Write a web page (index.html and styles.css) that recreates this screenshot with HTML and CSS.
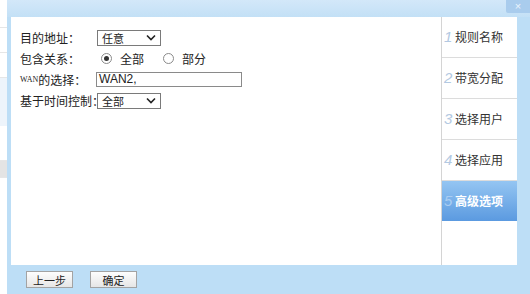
FILE: index.html
```html
<!DOCTYPE html>
<html lang="zh-CN">
<head>
    <meta charset="UTF-8">
    <title>高级选项</title>
    <link rel="stylesheet" href="styles.css">
</head>
<body>
<div class="page">
    <div class="backdrop">
        <div class="backdrop__row"></div>
        <div class="backdrop__row"></div>
        <div class="backdrop__row backdrop__row_blue"></div>
        <div class="backdrop__row backdrop__row_gray"></div>
        <div class="backdrop__row"></div>
    </div>

    <div class="dialog">
        <div class="dialog__head">
            <span class="dialog__close">&times;</span>
        </div>

        <div class="dialog__body">
            <div class="main">
                <div class="form">
                    <div class="form__label">目的地址：</div>
                    <div class="form__field">
                        <span class="select">任意<svg class="select__arrow" width="10" height="7" viewBox="0 0 10 7"><path d="M1 1.5 L5 5.5 L9 1.5" fill="none" stroke="#222" stroke-width="1.6"/></svg></span>
                    </div>

                    <div class="form__label">包含关系：</div>
                    <div class="form__field">
                        <span class="radio radio_checked"></span><span class="radio__text">全部</span>
                        <span class="radio"></span><span class="radio__text">部分</span>
                    </div>

                    <div class="form__label"><span class="form__wan">WAN</span>的选择：</div>
                    <div class="form__field">
                        <span class="text-input">WAN2,</span>
                    </div>

                    <div class="form__label">基于时间控制：</div>
                    <div class="form__field">
                        <span class="select">全部<svg class="select__arrow" width="10" height="7" viewBox="0 0 10 7"><path d="M1 1.5 L5 5.5 L9 1.5" fill="none" stroke="#222" stroke-width="1.6"/></svg></span>
                    </div>
                </div>
            </div>

            <ul class="steps">
                <li class="steps__item"><span class="steps__num">1</span>规则名称</li>
                <li class="steps__item"><span class="steps__num">2</span>带宽分配</li>
                <li class="steps__item"><span class="steps__num">3</span>选择用户</li>
                <li class="steps__item"><span class="steps__num">4</span>选择应用</li>
                <li class="steps__item steps__item_active"><span class="steps__num">5</span>高级选项</li>
            </ul>
        </div>

        <div class="dialog__foot">
            <button class="btn">上一步</button>
            <button class="btn">确定</button>
        </div>
    </div>
</div>
</body>
</html>
```

FILE: styles.css
```css
body {
    margin: 0;
    font-family: "Noto Sans CJK SC", "Noto Sans", sans-serif;
    font-size: 12px;
    color: #222;
    background: #fff;
}
.page {
    display: flex;
    width: 530px;
    height: 294px;
    overflow: hidden;
}

/* page behind the dialog */
.backdrop {
    width: 7px;
    background: #fff;
    padding-top: 27px;
}
.backdrop__row {
    height: 24px;
    border-top: 1px solid #e6e6e6;
}
.backdrop__row_blue { background: #edf4fb; height: 48px; }
.backdrop__row_gray { background: #e4e4e4; height: 16px; margin-top: 34px; }

.dialog {
    flex: 1;
    display: flex;
    flex-direction: column;
    background: #bddef6;
}
.dialog__head {
    height: 17px;
    display: flex;
    justify-content: flex-end;
    background: linear-gradient(#d3e8f9, #c3e0f6);
}
.dialog__close {
    width: 24px;
    height: 13px;
    line-height: 12px;
    text-align: center;
    font-family: "Liberation Sans", sans-serif;
    font-size: 11px;
    color: #eaf4fd;
    background: #a9cced;
    border-radius: 0 0 0 2px;
}
.dialog__body {
    display: flex;
    height: 248px;
    margin: 0 13px 0 4px;
}
.main {
    flex: 1;
    background: #fff;
    border-right: 1px solid #d4d4d4;
}
.form {
    display: grid;
    grid-template-columns: 77px auto;
    grid-auto-rows: 21px;
    padding: 10px 0 0 9px;
}
.form__label,
.form__field {
    display: flex;
    align-items: center;
    white-space: nowrap;
    font-size: 12px;
}
.form__wan {
    font-family: "Liberation Serif", serif;
    font-size: 8px;
}
.select {
    display: flex;
    align-items: center;
    justify-content: space-between;
    box-sizing: border-box;
    width: 64px;
    height: 16px;
    padding: 0 4px 0 4px;
    border: 1px solid #7a7a7a;
    font-size: 11px;
}
.radio {
    box-sizing: border-box;
    width: 11px;
    height: 11px;
    margin: 0 8px 0 4px;
    border: 1px solid #8a8a8a;
    border-radius: 50%;
    display: inline-flex;
    align-items: center;
    justify-content: center;
}
.radio_checked::after {
    content: "";
    width: 5px;
    height: 5px;
    border-radius: 50%;
    background: #333;
}
.radio__text {
    width: 43px;
}
.radio__text + .radio {
    margin-left: 0;
}
.text-input {
    box-sizing: border-box;
    width: 146px;
    height: 15px;
    line-height: 13px;
    padding-left: 2px;
    border: 1px solid #8a8a8a;
    font-family: "Liberation Sans", sans-serif;
    font-size: 12px;
    margin-left: -1px;
}

/* wizard steps */
.steps {
    list-style: none;
    margin: 0;
    padding: 0;
    width: 75px;
    background: #fff;
}
.steps__item {
    height: 40px;
    line-height: 40px;
    padding-left: 2px;
    border-bottom: 1px solid #dcdcdc;
    font-size: 12px;
    color: #333;
}
.steps__num {
    display: inline-block;
    width: 11px;
    font-size: 15px;
    font-style: italic;
    color: #b3c9e2;
    font-family: "Liberation Sans", sans-serif;
}
.steps__item_active {
    color: #fff;
    font-weight: bold;
    border-bottom: none;
    background: linear-gradient(#94c5f2, #5b9ae0);
}
.steps__item_active .steps__num {
    color: #aacdf2;
    font-weight: normal;
}

.dialog__foot {
    height: 29px;
    display: flex;
    align-items: center;
    gap: 17px;
    padding-left: 19px;
}
.btn {
    width: 47px;
    height: 17px;
    padding: 0;
    border: 1px solid #a3a3a3;
    background: linear-gradient(#fdfdfd, #e6e6e6);
    font-family: "Noto Sans CJK SC", sans-serif;
    font-size: 11px;
    color: #222;
}
```
